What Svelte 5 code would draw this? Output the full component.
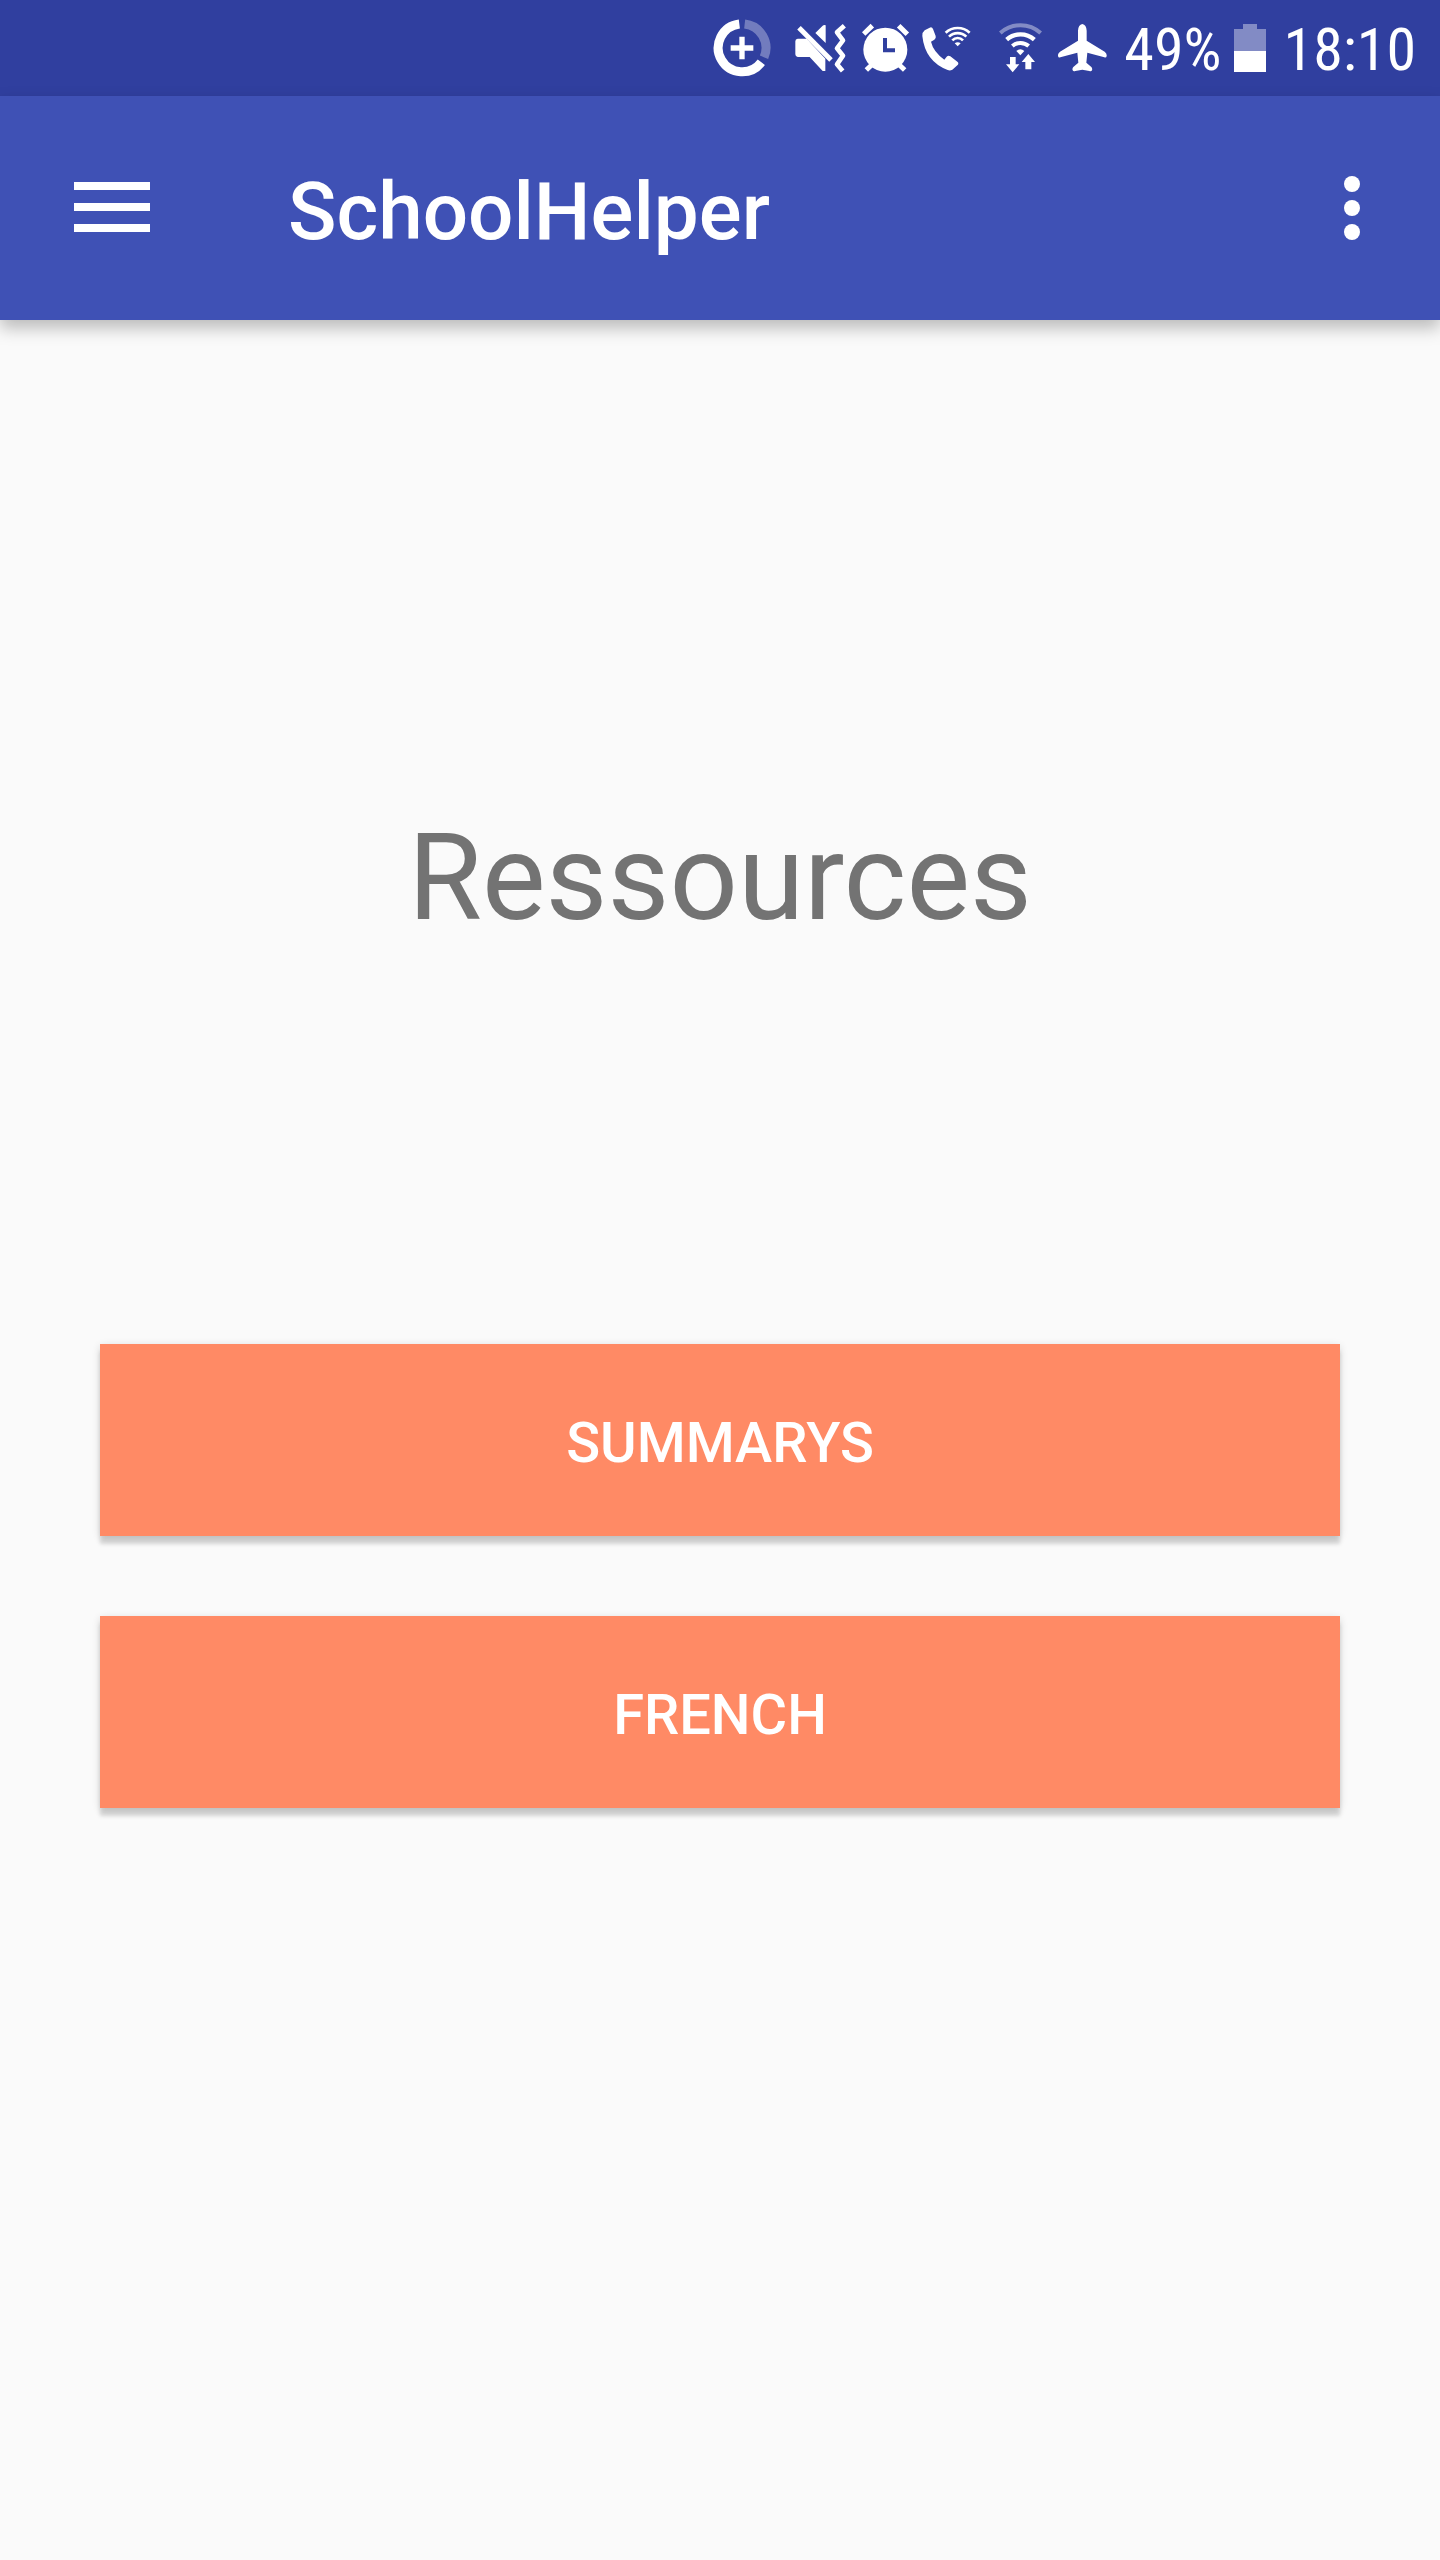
<script>
  const battery = '49%';
  const time = '18:10';
  const resources = ['Summarys', 'French'];
</script>

<div class="screen">
  <div class="status">
    <svg width="70" height="64" viewBox="39 48 210 192" aria-hidden="true">
      <g fill="none" stroke="#fff">
        <path d="M118 72A72 72 0 1 0 184 187" stroke-width="27" />
        <path d="M134 72A72 72 0 0 1 192 172" stroke-width="27" stroke-opacity=".32" />
        <path d="M126 110V178M92 144H160" stroke-width="16" />
      </g>
    </svg>
    <svg width="55" height="64" viewBox="285 48 165 192" aria-hidden="true">
      <path fill="#fff" d="M293 116H320L376 176V213H368L329 171H293Q286 170 286 163V124Q286 117 293 116ZM346 99L368 77Q372 74 377 76V129Z" />
      <path fill="none" stroke="#fff" stroke-width="15" d="M297 83L393 180" />
      <path fill="none" stroke="#fff" stroke-width="14" stroke-linejoin="round" d="M433 77L411 97L429 121L411 145L429 167L411 193L428 213" />
    </svg>
    <svg width="48" height="64" viewBox="36 48 144 192" aria-hidden="true">
      <circle cx="106" cy="149" r="66" fill="#fff" />
      <path fill="none" stroke="#fff" stroke-width="15" d="M41 102L67 77M146 77L172 103M68 192L49 210M145 192L164 210" />
      <path fill="none" stroke="#303f9f" stroke-width="12" d="M105 114V151H135" />
    </svg>
    <svg width="65" height="64" viewBox="216 48 195 192" aria-hidden="true">
      <path fill="#fff" d="M217 108Q217 96 224 91L239 83Q246 80 249 87L257 108Q259 115 253 119L243 125Q250 155 283 179L290 170Q295 165 301 169L322 185Q328 190 322 196L307 209Q300 213 293 210Q225 184 217 108Z" />
      <g fill="none" stroke="#fff" stroke-width="8">
        <path d="M287 98A53 53 0 0 1 359 98" />
        <path d="M297 110A37 37 0 0 1 349 110" />
        <path d="M307 121A22 22 0 0 1 339 121" />
      </g>
      <path fill="#fff" d="M314 130Q323 123 332 130L323 139Z" />
    </svg>
    <svg width="47" height="64" viewBox="57 48 141 192" aria-hidden="true">
      <g fill="none" stroke="#fff">
        <path d="M61 99A90 90 0 0 1 182 99" stroke-width="12" stroke-opacity=".4" />
        <path d="M80 119A62 62 0 0 1 163 119" stroke-width="13" />
        <path d="M97 138A37 37 0 0 1 146 138" stroke-width="12" />
      </g>
      <path fill="#fff" d="M109 153Q121 142 133 153L121 166ZM90 171H107V193H118L98 217L78 193H90ZM145 162L165 186H154V208H136V186H125Z" />
    </svg>
    <svg width="54" height="64" viewBox="234 48 162 192" aria-hidden="true">
      <path fill="#fff" d="M307 72Q319 74 320 92V122L374 155Q381 160 380 168Q379 174 373 172L322 158L319 188L334 201Q338 206 336 211Q334 215 328 213L307 209L286 213Q280 215 278 211Q276 206 280 201L295 188L292 158L241 172Q235 174 234 168Q233 160 240 155L294 122V92Q295 74 307 72Z" />
    </svg>
    <span>{battery}</span>
    <svg width="38" height="64" viewBox="375 48 114 192" aria-hidden="true">
      <path fill="#fff" fill-opacity=".4" d="M402 72H444V87H471V153H375V87H402Z" />
      <path fill="#fff" d="M375 153H471V216H375Z" />
    </svg>
    <time>{time}</time>
  </div>

  <header>
    <button class="icon" aria-label="Open navigation">
      <svg width="76" height="52" viewBox="0 0 76 52"><path fill="#fff" d="M0 0H76V8H0ZM0 21H76V29H0ZM0 42H76V50H0Z" /></svg>
    </button>
    <h1>SchoolHelper</h1>
    <button class="icon" aria-label="More options">
      <svg width="16" height="64" viewBox="0 0 16 64" fill="#fff"><circle cx="8" cy="8" r="8" /><circle cx="8" cy="32" r="8" /><circle cx="8" cy="56" r="8" /></svg>
    </button>
  </header>

  <main>
    <h2>Ressources</h2>
    <div class="list">
      {#each resources as name}
        <button class="resource">{name}</button>
      {/each}
    </div>
  </main>
</div>

<style>
  :global(body) {
    background: #fafafa;
  }
  .screen {
    min-height: 100vh;
    font-family: Roboto, sans-serif;
    background: #fafafa;
  }
  .status {
    display: flex;
    align-items: center;
    justify-content: flex-end;
    gap: 12px;
    height: 96px;
    padding: 0 24px;
    box-sizing: border-box;
    background: #303f9f;
    color: #fff;
    font-family: 'Roboto Condensed', Roboto, sans-serif;
    font-size: 60px;
    line-height: 64px;
  }
  .status span,
  .status time {
    padding-top: 4px;
  }
  svg {
    display: block;
    flex: none;
  }
  header {
    display: flex;
    align-items: center;
    height: 224px;
    padding: 0 80px 0 74px;
    box-sizing: border-box;
    background: #3f51b5;
    color: #fff;
    box-shadow: 0 8px 16px rgba(0, 0, 0, 0.26);
  }
  button {
    border: 0;
    padding: 0;
    font-family: inherit;
    cursor: pointer;
  }
  .icon {
    background: none;
  }
  h1 {
    flex: 1;
    margin: 0 0 0 138px;
    padding-top: 8px;
    font-size: 80px;
    line-height: 96px;
    font-weight: 500;
  }
  main {
    padding: 478px 100px 100px;
  }
  h2 {
    margin: 0;
    text-align: center;
    font-size: 120px;
    line-height: 160px;
    font-weight: 400;
    color: #737373;
  }
  .list {
    display: grid;
    gap: 80px;
    margin-top: 386px;
  }
  .resource {
    height: 192px;
    padding-top: 6px;
    background: #ff8a65;
    color: #fff;
    font-size: 56px;
    line-height: 64px;
    font-weight: 500;
    text-transform: uppercase;
    box-shadow: 0 8px 4px rgba(0, 0, 0, 0.14), 0 2px 8px rgba(0, 0, 0, 0.14);
  }
</style>
